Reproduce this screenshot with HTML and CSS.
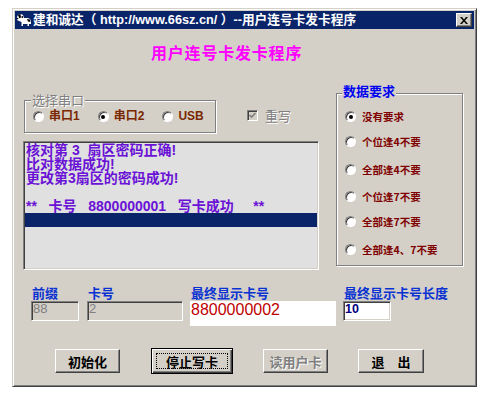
FILE: index.html
```html
<!DOCTYPE html>
<html lang="zh-CN">
<head>
<meta charset="utf-8">
<title>用户连号卡发卡程序</title>
<link rel="stylesheet" href="styles.css">
</head>
<body>
<div class="window">
  <div class="titlebar">
    <svg class="app-icon" width="16" height="16" viewBox="0 0 16 16">
      <path d="M1 5 L2 3 L5 2 L7 3 L8 6 L12 6 L14 7 L15 9 L15 12 L13 12 L13 14 L11.5 14 L11.5 12 L7 12 L7 14 L5.5 14 L5.5 10 L3 9 L1 8 Z" fill="#fff"/>
      <path d="M2 3 L4.5 2 L5 5.5 L3.2 6.2 Z" fill="#000"/>
      <circle cx="6.3" cy="5" r="0.9" fill="#000"/>
      <circle cx="1.6" cy="6.6" r="0.8" fill="#000"/>
      <path d="M11 7 L14 7.5 L14.5 10 L12 9.5 Z" fill="#000"/>
    </svg>
    <span class="title-text">建和诚达（ http://www.66sz.cn/ ）--用户连号卡发卡程序</span>
    <span class="close-btn">
      <svg width="8" height="7" viewBox="0 0 8 7"><path d="M0 0h2l2 2.4L6 0h2L5 3.5 8 7H6L4 4.6 2 7H0l3-3.5z" fill="#000"/></svg>
    </span>
  </div>

  <div class="client">
    <h1 class="heading">用户连号卡发卡程序</h1>

    <div class="middle">
      <div class="left-col">
        <div class="port-row">
          <div class="group port-group">
            <span class="group-label port-label">选择串口</span>
            <div class="port-options">
              <div class="radio-item"><span class="radio"></span><span class="port-text">串口1</span></div>
              <div class="radio-item"><span class="radio checked"></span><span class="port-text">串口2</span></div>
              <div class="radio-item"><span class="radio"></span><span class="port-text">USB</span></div>
            </div>
          </div>
          <div class="check-item">
            <span class="checkbox">
              <svg width="9" height="9" viewBox="0 0 9 9"><path d="M1.5 4 L3.5 6 L7.5 2" fill="none" stroke="#808080" stroke-width="1.7"/></svg>
            </span>
            <span class="check-text">重写</span>
          </div>
        </div>

        <div class="listbox">
          <div class="list-row">核对第 3  扇区密码正确!</div>
          <div class="list-row">比对数据成功!</div>
          <div class="list-row">更改第3扇区的密码成功!</div>
          <div class="list-row"> </div>
          <div class="list-row">**   卡号   8800000001   写卡成功     **</div>
          <div class="list-row selected"> </div>
        </div>
      </div>

      <div class="group req-group">
        <span class="group-label req-label">数据要求</span>
        <div class="req-list">
          <div class="req-item"><span class="radio checked"></span><span class="req-text">没有要求</span></div>
          <div class="req-item"><span class="radio"></span><span class="req-text">个位逢4不要</span></div>
          <div class="req-item"><span class="radio"></span><span class="req-text">全部逢4不要</span></div>
          <div class="req-item"><span class="radio"></span><span class="req-text">个位逢7不要</span></div>
          <div class="req-item"><span class="radio"></span><span class="req-text">全部逢7不要</span></div>
          <div class="req-item"><span class="radio"></span><span class="req-text">全部逢4、7不要</span></div>
        </div>
      </div>
    </div>

    <div class="fields">
      <div class="field-label">前缀</div>
      <div class="field-label">卡号</div>
      <div class="field-label">最终显示卡号</div>
      <div class="field-label">最终显示卡号长度</div>
      <div class="field-box prefix-box">88</div>
      <div class="field-box card-box">2</div>
      <div class="display-box">8800000002</div>
      <div class="field-box len-box">10</div>
    </div>

    <div class="buttons">
      <button class="btn btn-init">初始化</button>
      <button class="btn btn-default"><span class="focus">停止写卡</span></button>
      <button class="btn btn-disabled">读用户卡</button>
      <button class="btn btn-exit">退　出</button>
    </div>
  </div>
</div>
</body>
</html>
```

FILE: styles.css
```css
* { box-sizing: border-box; }

html, body {
  margin: 0;
  padding: 0;
  background: #fff;
}

body {
  font-family: "Liberation Sans", "Noto Sans CJK SC", sans-serif;
}

.window {
  margin: 8px 0 0 12px;
  width: 465px;
  height: 379px;
  background: #d4d0c8;
  border: 1px solid;
  border-color: #d4d0c8 #404040 #404040 #d4d0c8;
  box-shadow: inset 1px 1px 0 #fff, inset -1px -1px 0 #808080;
  padding: 2px;
  display: flex;
  flex-direction: column;
}

/* ---------- title bar ---------- */
.titlebar {
  height: 18px;
  flex: none;
  display: flex;
  align-items: center;
  background: #0a246a;
  color: #fff;
  padding-left: 1px;
}

.app-icon { flex: none; display: block; }

.title-text {
  margin-left: 1px;
  font: bold 12.7px/18px "Liberation Sans", "Noto Sans CJK SC", sans-serif;
  white-space: nowrap;
}

.close-btn {
  margin-left: auto;
  margin-right: 2px;
  width: 16px;
  height: 14px;
  display: flex;
  align-items: center;
  justify-content: center;
  background: #d4d0c8;
  border: 1px solid;
  border-color: #fff #404040 #404040 #fff;
  box-shadow: inset -1px -1px 0 #808080;
}
.close-btn svg { display: block; }

/* ---------- client ---------- */
.client {
  flex: 1;
  display: flex;
  flex-direction: column;
}

.heading {
  margin: 13px 0 0 136px;
  font: bold 16px/20px "Noto Sans CJK SC", sans-serif;
  letter-spacing: 0.8px;
  color: #ff00ff;
}

.middle {
  display: flex;
  align-items: flex-start;
  margin: 31px 0 0 8px;
}

.left-col {
  width: 296px;
  margin-top: 7px;
}

/* group boxes */
.group {
  border: 1px solid #808080;
  box-shadow: 1px 1px 0 #fff, inset 1px 1px 0 #fff;
}

.group-label {
  display: block;
  width: fit-content;
  padding: 0 1px;
  background: #d4d0c8;
  white-space: nowrap;
}

.port-row {
  display: flex;
  align-items: flex-start;
  margin-left: 1px;
}

.port-group {
  width: 192px;
  height: 33px;
}

.port-label {
  margin: -8px 0 0 6px;
  font: 13px/14px "Noto Sans CJK SC", sans-serif;
  color: #808080;
  text-shadow: 1px 1px 0 #fff;
}

.port-options {
  display: flex;
  align-items: center;
  gap: 18px;
  margin-top: 3px;
  padding-left: 8px;
  height: 13px;
}

.radio-item {
  display: flex;
  align-items: center;
  gap: 5px;
}

.port-text {
  font: bold 12px/13px "Liberation Sans", "Noto Sans CJK SC", sans-serif;
  color: #7a2800;
}

.radio {
  flex: none;
  width: 11px;
  height: 11px;
  border-radius: 50%;
  background: #fff;
  border: 1px solid;
  border-color: #808080 #fff #fff #808080;
  box-shadow: inset 1px 1px 0 #404040;
  display: flex;
  align-items: center;
  justify-content: center;
}

.radio.checked::after {
  content: "";
  width: 4px;
  height: 4px;
  border-radius: 50%;
  background: #000;
}

.check-item {
  display: flex;
  align-items: center;
  gap: 7px;
  margin: 10px 0 0 31px;
}

.checkbox {
  width: 11px;
  height: 11px;
  background: #d4d0c8;
  border: 1px solid;
  border-color: #808080 #fff #fff #808080;
  box-shadow: inset 1px 1px 0 #404040;
  display: flex;
  align-items: center;
  justify-content: center;
}
.checkbox svg { display: block; }

.check-text {
  font: 13px/11px "Noto Sans CJK SC", sans-serif;
  color: #808080;
  text-shadow: 1px 1px 0 #fff;
}

/* list box */
.listbox {
  margin-top: 8px;
  height: 129px;
  background: #e0e0e0;
  border: 1px solid;
  border-color: #808080 #fff #fff #808080;
  box-shadow: inset 1px 1px 0 #404040, inset -1px -1px 0 #d4d0c8;
  padding: 1px;
  overflow: hidden;
}

.list-row {
  height: 14px;
  padding-left: 1px;
  font: bold 14px/14px "Liberation Sans", "Noto Sans CJK SC", sans-serif;
  color: #6a12d6;
  white-space: pre;
}

.list-row.selected {
  background: #0a246a;
}

/* data requirement group */
.req-group {
  margin-left: 17px;
  width: 127px;
  height: 173px;
}

.req-label {
  margin: -11px 0 0 5px;
  font: bold 13px/15px "Noto Sans CJK SC", sans-serif;
  color: #0000f0;
}

.req-list {
  display: grid;
  grid-template-rows: 25px 28px 27px 25px 28px 11px;
  margin-top: 13px;
  padding-left: 8px;
}

.req-item {
  display: flex;
  align-items: flex-start;
  gap: 6px;
}

.req-text {
  font: bold 10.5px/11px "Noto Sans CJK SC", sans-serif;
  color: #800000;
  white-space: nowrap;
}

/* fields */
.fields {
  display: grid;
  grid-template-columns: 49px 96px 146px 48px;
  column-gap: 7px;
  align-items: start;
  margin: 15px 0 0 16px;
}

.field-label {
  font: bold 13px/16px "Noto Sans CJK SC", sans-serif;
  color: #0a32d2;
  padding-left: 1px;
  white-space: nowrap;
}

.field-box {
  height: 20px;
  border: 1px solid;
  border-color: #808080 #fff #fff #808080;
  box-shadow: inset 1px 1px 0 #404040, inset -1px -1px 0 #d4d0c8;
  padding: 1px 1px 0;
  font: 13px/12px "Liberation Sans", sans-serif;
  background: #d4d0c8;
  color: #808080;
}

.prefix-box { width: 48px; }
.card-box { width: 96px; }

.len-box {
  width: 48px;
  background: #fff;
  color: #000080;
  font-weight: bold;
  font-size: 12.5px;
}

.display-box {
  height: 25px;
  background: #fff;
  padding: 1px 0 0 1px;
  font: 16px/15px "Liberation Sans", sans-serif;
  color: #c00000;
}

/* buttons */
.buttons {
  display: flex;
  align-items: center;
  margin: 22px 0 0 40px;
}

.btn {
  appearance: none;
  margin: 0;
  padding: 0;
  height: 24px;
  width: 65px;
  background: #d4d0c8;
  border: 1px solid;
  border-color: #fff #404040 #404040 #fff;
  box-shadow: inset -1px -1px 0 #808080;
  font: bold 13px/1 "Noto Sans CJK SC", sans-serif;
  color: #000;
  display: flex;
  align-items: center;
  justify-content: center;
}

.btn-default {
  margin-left: 31px;
  width: 82px;
  height: 26px;
  border: 1px solid #000;
  box-shadow: inset 1px 1px 0 #fff, inset -1px -1px 0 #404040, inset -2px -2px 0 #808080;
}

.focus {
  width: 72px;
  height: 16px;
  border: 1px dotted #000;
  display: flex;
  align-items: center;
  justify-content: center;
}

.btn-disabled {
  margin-left: 30px;
  color: #808080;
  text-shadow: 1px 1px 0 #fff;
}

.btn-exit {
  margin-left: 30px;
  width: 66px;
}
```
